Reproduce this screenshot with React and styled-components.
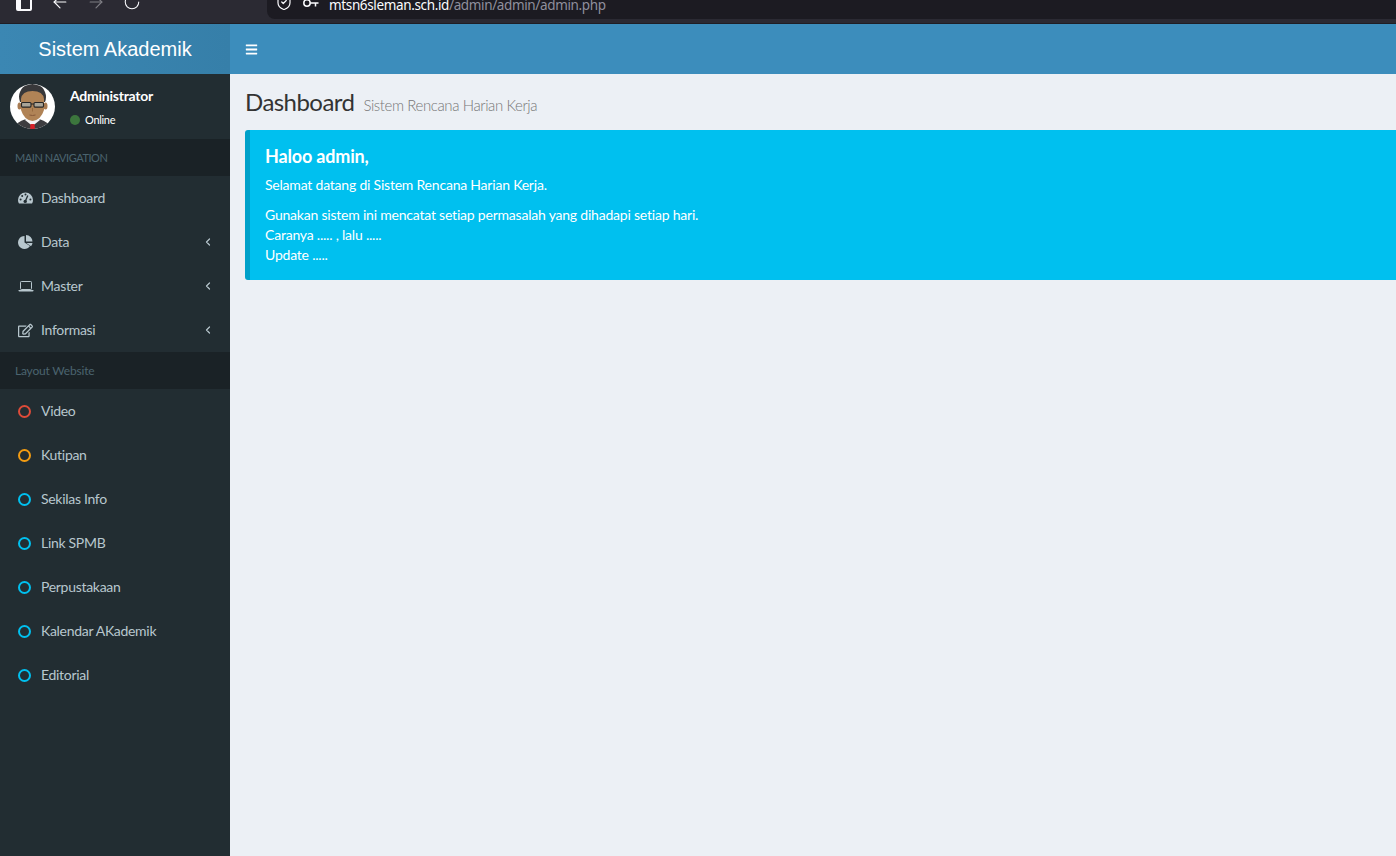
import styled, { createGlobalStyle } from "styled-components";
import { FaRegEdit, FaBars } from "react-icons/fa";
import { ArrowLeft, ArrowRight, ChevronLeft, RotateCw, ShieldCheck } from "lucide-react";

const GlobalStyle = createGlobalStyle`
  html, body {
    margin: 0;
    height: 100%;
    overflow: hidden;
    background: #ecf0f5;
  }
  body {
    font-family: Lato, "Noto Sans", sans-serif;
    font-size: 14px;
    letter-spacing: -0.24px;
    color: #333;
  }
  * {
    box-sizing: border-box;
  }
`;

const GaugeIcon = () => (
  <svg width="15" height="12" viewBox="0 0 15 12">
    <path d="M7.5 0.5 A7.5 7.5 0 0 0 0 8 Q0 10 1 11.5 H14 Q15 10 15 8 A7.5 7.5 0 0 0 7.5 0.5 Z" fill="currentColor" />
    <g fill="#222d32">
      <circle cx="2.6" cy="7.4" r="1" />
      <circle cx="4.2" cy="3.9" r="1" />
      <circle cx="7.5" cy="2.6" r="1" />
      <circle cx="12.4" cy="7.4" r="1" />
      <circle cx="7.2" cy="9.4" r="1.7" />
    </g>
    <path d="M7.2 9.4 L9.8 3.6" stroke="#222d32" strokeWidth="1.3" />
  </svg>
);

const PieIcon = () => (
  <svg width="15" height="14" viewBox="0 0 15 14">
    <g fill="currentColor">
      <path d="M6.5 1 A6.5 6.5 0 1 0 12 11 L6.5 7.5 Z" />
      <path d="M8 0 A6.5 6.5 0 0 1 14.5 6.5 H8 Z" />
      <path d="M8.3 8 H14.5 A6.5 6.5 0 0 1 13 11.3 Z" />
    </g>
  </svg>
);

const LaptopIcon = () => (
  <svg width="16" height="11" viewBox="0 0 16 11">
    <rect x="2.5" y="0.5" width="11" height="8" rx="0.8" fill="none" stroke="currentColor" />
    <path d="M0.5 9 H15.5 V9.6 Q15.5 10.5 14.5 10.5 H1.5 Q0.5 10.5 0.5 9.6 Z" fill="currentColor" />
  </svg>
);

const KeyIcon = () => (
  <svg width="16" height="10" viewBox="0 0 16 10">
    <circle cx="4" cy="4" r="3.2" fill="none" stroke="currentColor" strokeWidth="1.5" />
    <path d="M7.2 4 H15.5 M12.5 4 V7.5" fill="none" stroke="currentColor" strokeWidth="1.5" />
  </svg>
);

const mainMenu = [
  { label: "Dashboard", icon: <GaugeIcon /> },
  { label: "Data", icon: <PieIcon />, more: true },
  { label: "Master", icon: <LaptopIcon />, more: true },
  { label: "Informasi", icon: <FaRegEdit size={15} />, more: true },
];

const layoutMenu = [
  { label: "Video", color: "#dd4b39" },
  { label: "Kutipan", color: "#f39c12" },
  { label: "Sekilas Info", color: "#00c0ef" },
  { label: "Link SPMB", color: "#00c0ef" },
  { label: "Perpustakaan", color: "#00c0ef" },
  { label: "Kalendar AKademik", color: "#00c0ef" },
  { label: "Editorial", color: "#00c0ef" },
];

const Avatar = () => (
  <AvatarSvg viewBox="0 0 45 45">
    <defs>
      <clipPath id="avatar-clip">
        <circle cx="22.5" cy="22.5" r="22.5" />
      </clipPath>
    </defs>
    <g clipPath="url(#avatar-clip)">
      <rect width="45" height="45" fill="#fff" />
      <path d="M3 45 Q6 38 16 35 L29 35 Q39 38 42 45 Z" fill="#3d3d40" />
      <path d="M15 36 L22.5 42 L30 36 L27 32 H18 Z" fill="#f4f4f4" />
      <path d="M20.5 40 H24.5 L25 45 H20 Z" fill="#d8232a" />
      <path d="M10 18 Q8 12 10 8 Q12 2 18 1 Q22 -1 27 1 Q33 2 35 8 Q37 13 35 18 Z" fill="#38383a" />
      <ellipse cx="9.5" cy="22" rx="2" ry="3.5" fill="#a87b52" />
      <ellipse cx="35.5" cy="22" rx="2" ry="3.5" fill="#a87b52" />
      <path d="M11 15 Q12 7 22.5 7 Q33 7 34 15 L34 26 Q31 36 22.5 37 Q14 36 11 26 Z" fill="#b08356" />
      <rect x="11.5" y="18.5" width="9.5" height="4.6" rx="1" fill="#a9a498" stroke="#262626" strokeWidth="1.1" />
      <rect x="24" y="18.5" width="9.5" height="4.6" rx="1" fill="#a9a498" stroke="#262626" strokeWidth="1.1" />
      <path d="M21 20 H24" stroke="#262626" strokeWidth="1.1" />
      <path d="M22.5 24 V27.5" stroke="#96693f" strokeWidth="1" />
      <path d="M19.5 31 Q22.5 32 25.5 31" stroke="#86593a" strokeWidth="1" fill="none" />
    </g>
  </AvatarSvg>
);

const App = () => {
  return (
    <>
      <GlobalStyle />
      <Page>
        <BrowserBar>
          <BrowserTools>
            <PanelGlyph />
            <ToolIcon $left={18}>
              <ArrowLeft size={20} strokeWidth={1.4} />
            </ToolIcon>
            <ToolIcon $left={16} $dim>
              <ArrowRight size={20} strokeWidth={1.4} />
            </ToolIcon>
            <ToolIcon $left={17}>
              <RotateCw size={18} strokeWidth={1.4} />
            </ToolIcon>
          </BrowserTools>
          <UrlField>
            <ShieldCheck size={18} strokeWidth={1.6} />
            <KeyIcon />
            <UrlText>
              mtsn6sleman.sch.id<UrlPath>/admin/admin/admin.php</UrlPath>
            </UrlText>
          </UrlField>
        </BrowserBar>

        <Shell>
          <Sidebar>
            <Logo>Sistem Akademik</Logo>
            <UserPanel>
              <Avatar />
              <UserInfo>
                <UserName>Administrator</UserName>
                <UserStatus>
                  <StatusDot />
                  Online
                </UserStatus>
              </UserInfo>
            </UserPanel>

            <SectionHeader $caps>MAIN NAVIGATION</SectionHeader>
            {mainMenu.map((item) => (
              <MenuItem key={item.label}>
                <MenuIcon>{item.icon}</MenuIcon>
                <MenuLabel>{item.label}</MenuLabel>
                {item.more && (
                  <MenuArrow>
                    <ChevronLeft size={12} strokeWidth={2.4} />
                  </MenuArrow>
                )}
              </MenuItem>
            ))}

            <SectionHeader>Layout Website</SectionHeader>
            {layoutMenu.map((item) => (
              <MenuItem key={item.label}>
                <MenuIcon>
                  <Ring $color={item.color} />
                </MenuIcon>
                <MenuLabel>{item.label}</MenuLabel>
              </MenuItem>
            ))}
          </Sidebar>

          <Main>
            <Navbar>
              <FaBars size={13} />
            </Navbar>
            <Content>
              <PageHeader>
                <PageTitle>Dashboard</PageTitle>
                <PageSubtitle>Sistem Rencana Harian Kerja</PageSubtitle>
              </PageHeader>
              <Callout>
                <CalloutTitle>Haloo admin,</CalloutTitle>
                <CalloutText>Selamat datang di Sistem Rencana Harian Kerja.</CalloutText>
                <CalloutText>
                  Gunakan sistem ini mencatat setiap permasalah yang dihadapi setiap hari.
                  <br />
                  Caranya ..... , lalu .....
                  <br />
                  Update .....
                </CalloutText>
              </Callout>
            </Content>
          </Main>
        </Shell>
      </Page>
    </>
  );
};

export default App;

const Page = styled.div`
  display: flex;
  flex-direction: column;
  height: 856px;
  overflow: hidden;
`;

const BrowserBar = styled.div`
  display: flex;
  flex: 0 0 24px;
  background: #2b2a33;
  border-bottom: 1px solid #1f1e25;
  overflow: hidden;
`;

const BrowserTools = styled.div`
  display: flex;
  align-items: center;
  width: 267px;
  height: 4px;
  padding-left: 16px;
  color: #fbfbfe;
`;

const PanelGlyph = styled.span`
  flex: none;
  width: 16px;
  height: 18px;
  border: 2px solid #fbfbfe;
  border-left-width: 5px;
  border-radius: 2px;
`;

const ToolIcon = styled.span`
  display: flex;
  margin-left: ${(props) => props.$left}px;
  opacity: ${(props) => (props.$dim ? 0.4 : 1)};
`;

const UrlField = styled.div`
  display: flex;
  flex: 1;
  align-items: flex-start;
  height: 19px;
  padding-left: 8px;
  background: #1c1b22;
  border-bottom-left-radius: 8px;
  color: #fbfbfe;

  > svg:first-child {
    flex: none;
    margin-top: -7px;
  }
  > svg:nth-child(2) {
    flex: none;
    margin: -1px 0 0 10px;
  }
`;

const UrlText = styled.span`
  margin: -4px 0 0 10px;
  font-family: "Noto Sans", sans-serif;
  font-size: 13.5px;
  letter-spacing: -0.36px;
  line-height: 18px;
  color: #fbfbfe;
`;

const UrlPath = styled.span`
  color: #8f8f9d;
`;

const Shell = styled.div`
  display: flex;
  flex: 1;
  min-height: 0;
`;

const Sidebar = styled.aside`
  flex: 0 0 230px;
  background: #222d32;
`;

const Logo = styled.div`
  height: 50px;
  background: linear-gradient(90deg, #3b87b3, #367fa9);
  color: #fff;
  font-family: "Liberation Sans", Arial, sans-serif;
  font-size: 20px;
  letter-spacing: 0;
  line-height: 50px;
  text-align: center;
`;

const UserPanel = styled.div`
  display: flex;
  align-items: center;
  height: 65px;
  padding: 10px;
`;

const AvatarSvg = styled.svg`
  flex: none;
  width: 45px;
  height: 45px;
`;

const UserInfo = styled.div`
  margin: 3px 0 0 15px;
  color: #fff;
`;

const UserName = styled.div`
  margin-bottom: 10px;
  font-weight: 700;
  font-size: 14px;
  line-height: 14px;
`;

const UserStatus = styled.div`
  display: flex;
  align-items: center;
  gap: 5px;
  font-size: 11px;
  letter-spacing: -0.3px;
  line-height: 14px;
`;

const StatusDot = styled.span`
  width: 10px;
  height: 10px;
  border-radius: 50%;
  background: #3c763d;
`;

const SectionHeader = styled.div`
  height: 37px;
  padding-left: 15px;
  background: #1a2226;
  color: #4b646f;
  font-size: ${(props) => (props.$caps ? "11px" : "12px")};
  letter-spacing: ${(props) => (props.$caps ? "-0.45px" : "-0.2px")};
  line-height: 37px;
`;

const MenuItem = styled.div`
  display: flex;
  align-items: center;
  height: 44px;
  padding: 0 16px 0 18px;
  color: #b8c7ce;
`;

const MenuIcon = styled.span`
  display: flex;
  align-items: center;
  flex: 0 0 23px;
`;

const Ring = styled.span`
  width: 13px;
  height: 13px;
  border: 2px solid ${(props) => props.$color};
  border-radius: 50%;
`;

const MenuLabel = styled.span`
  flex: 1;
  margin-top: -2px;
  letter-spacing: -0.3px;
`;

const MenuArrow = styled.span`
  display: flex;
`;

const Main = styled.div`
  display: flex;
  flex: 1;
  flex-direction: column;
  min-width: 0;
`;

const Navbar = styled.header`
  display: flex;
  align-items: center;
  flex: 0 0 50px;
  padding-left: 15px;
  background: #3c8dbc;
  color: #fff;
`;

const Content = styled.main`
  flex: 1;
  padding-left: 15px;
  background: #ecf0f5;
`;

const PageHeader = styled.div`
  display: flex;
  align-items: baseline;
  gap: 9px;
  height: 56px;
  padding-top: 14px;
`;

const PageTitle = styled.h1`
  margin: 0;
  font-weight: 400;
  font-size: 24px;
  letter-spacing: -0.55px;
  line-height: 28px;
`;

const PageSubtitle = styled.small`
  color: #777;
  font-weight: 300;
  font-size: 15px;
  letter-spacing: -0.4px;
`;

const Callout = styled.section`
  height: 150px;
  padding: 16px 0 0 15px;
  background: #00c0ef;
  border-left: 5px solid #00a1c9;
  border-radius: 3px 0 0 3px;
  color: #fff;
`;

const CalloutTitle = styled.h4`
  margin: 0 0 9px;
  font-weight: 700;
  font-size: 18px;
  letter-spacing: -0.17px;
  line-height: 20px;
`;

const CalloutText = styled.p`
  margin: 0 0 10px;
  letter-spacing: -0.21px;
  line-height: 20px;
`;
